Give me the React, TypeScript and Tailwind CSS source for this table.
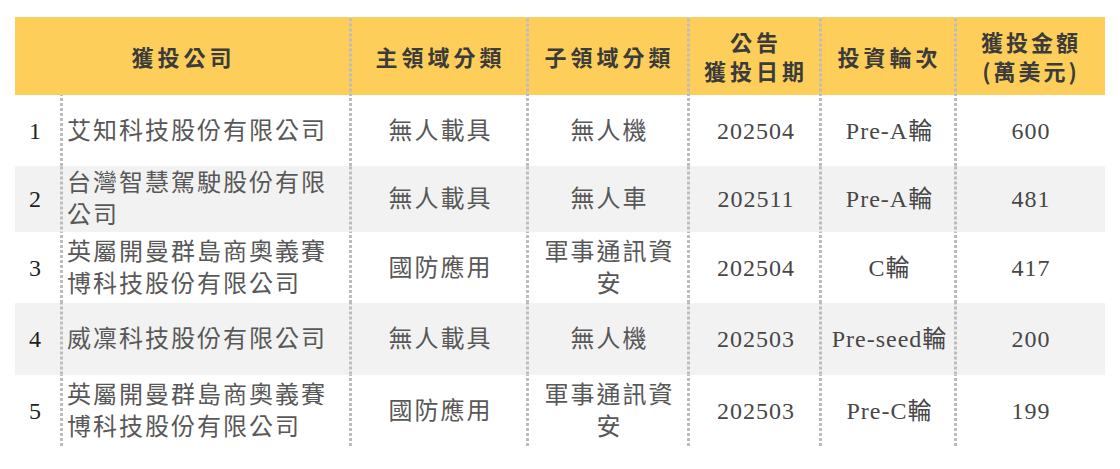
const rows = [
  { no: "1", company: "艾知科技股份有限公司", main: "無人載具", sub: "無人機", date: "202504", round: "Pre-A輪", amount: "600", h: "h-[71px]" },
  { no: "2", company: "台灣智慧駕駛股份有限公司", main: "無人載具", sub: "無人車", date: "202511", round: "Pre-A輪", amount: "481", h: "h-[66px]" },
  { no: "3", company: "英屬開曼群島商奧義賽博科技股份有限公司", main: "國防應用", sub: "軍事通訊資安", date: "202504", round: "C輪", amount: "417", h: "h-[71px]" },
  { no: "4", company: "威凜科技股份有限公司", main: "無人載具", sub: "無人機", date: "202503", round: "Pre-seed輪", amount: "200", h: "h-[72px]" },
  { no: "5", company: "英屬開曼群島商奧義賽博科技股份有限公司", main: "國防應用", sub: "軍事通訊資安", date: "202503", round: "Pre-C輪", amount: "199", h: "h-[71px]" },
]

// dashed column divider drawn as a repeating strip on the cell's right edge
const dash =
  "bg-[linear-gradient(to_bottom,#bdbdbd_0,#bdbdbd_3px,transparent_3px)] bg-[length:3px_5px] bg-repeat-y bg-right"

const serif = "font-[Liberation_Serif,Noto_Sans_CJK_TC,serif]"
const cjk = "text-[24px] tracking-[2px] text-[#585858]"
const num = "text-[24px] tracking-[1px] text-[#474747]"

export default function App() {
  return (
    <div className={`h-[469px] w-[1120px] bg-white pl-[15px] pt-[17px] ${serif}`}>
      <table className="w-[1090px] table-fixed border-collapse">
        <colgroup>
          <col className="w-[48px]" />
          <col className="w-[289px]" />
          <col className="w-[177px]" />
          <col className="w-[161px]" />
          <col className="w-[132px]" />
          <col className="w-[135px]" />
          <col className="w-[148px]" />
        </colgroup>
        <thead>
          <tr className="h-[78px] bg-[#fdcf5a] font-[Noto_Sans_CJK_TC,Noto_Sans,sans-serif] text-[22px] font-bold leading-[29px] tracking-[4px] text-[#3b3b3b]">
            <th colSpan={2} className={`p-0 text-center ${dash}`}>獲投公司</th>
            <th className={`p-0 text-center ${dash}`}>主領域分類</th>
            <th className={`p-0 text-center ${dash}`}>子領域分類</th>
            <th className={`p-0 text-center ${dash}`}>公告<br />獲投日期</th>
            <th className={`p-0 text-center ${dash}`}>投資輪次</th>
            <th className="p-0 text-center tracking-[3px]">獲投金額<br />(萬美元)</th>
          </tr>
        </thead>
        <tbody>
          {rows.map((r, i) => (
            <tr key={r.no} className={`${r.h} ${i % 2 === 1 ? "bg-[#f2f2f2]" : "bg-white"} leading-[32px]`}>
              <td className={`p-0 pr-[8px] text-center text-[24px] text-[#1f1f1f] ${dash}`}>{r.no}</td>
              <td className={`pl-[4px] pr-[14px] text-left ${cjk} ${dash}`}>{r.company}</td>
              <td className={`p-0 text-center ${cjk} ${dash}`}>{r.main}</td>
              <td className={`px-[12px] text-center ${cjk} ${dash}`}>{r.sub}</td>
              <td className={`p-0 text-center ${num} ${dash}`}>{r.date}</td>
              <td className={`whitespace-nowrap p-0 text-center ${num} ${dash}`}>{r.round}</td>
              <td className={`p-0 text-center ${num}`}>{r.amount}</td>
            </tr>
          ))}
        </tbody>
      </table>
    </div>
  )
}
